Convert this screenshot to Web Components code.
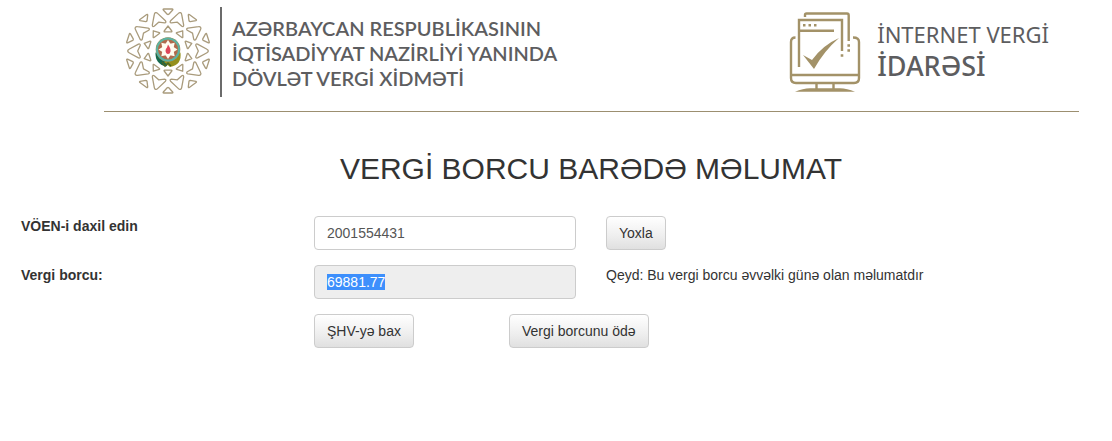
<!DOCTYPE html>
<html lang="az">
<head>
<meta charset="utf-8">
<title>Vergi borcu barədə məlumat</title>
<style>
body { margin: 0; background: #fff; color: #333; font: 14px/20px "Liberation Sans", Arial, sans-serif; }
</style>
</head>
<body>
<debt-page></debt-page>
<script>
const define = (name, html, setup) => customElements.define(name, class extends HTMLElement {
  constructor() {
    super();
    const t = document.createElement('template');
    t.innerHTML = html;
    this.attachShadow({ mode: 'open' }).append(t.content.cloneNode(true));
  }
  connectedCallback() { if (setup) setup.call(this, this.shadowRoot); }
});

// Ten-fold rosette: outer triangles, arrowheads and inner triangles around the emblem
define('ministry-emblem', `
<style>:host { display: block; flex: none; width: 86px; height: 88px; } svg { display: block; }</style>
<svg width="86" height="88" viewBox="-43 -44 86 88" role="img" aria-label="Gerb">
  <g id="ring" fill="none" stroke="#a99b7c" stroke-width="1.3" stroke-linejoin="round"></g>
  <path d="M-12.500 1.500Q-13 13-2 15.500L4 10-5 4Z" fill="#17694d"/>
  <path d="M12.500 1.500Q14 14 2 16L-4 11 6 5Z" fill="#94901d"/>
  <path d="M-6 11l3 4 3-3 3 3" fill="none" stroke="#4a6424" stroke-width="1.500"/>
  <circle cy="-1.500" r="12.300" fill="#a58a52"/>
  <circle cy="-1.500" r="11" fill="none" stroke="#5bb3a3" stroke-width="2"/>
  <circle cy="-1.500" r="9.800" fill="#b06a4c"/>
  <g id="star" transform="translate(0 -1.500)" fill="#fffdf0"></g>
  <path d="M0-6.500Q3-2.500 2.500 0.500 2 3 0 3-2 3-2.500 0-2.500-2.500-1-3.500Z" fill="#df4658"/>
</svg>`, function (root) {
  let ring = '';
  for (let i = 0; i < 10; i++) {
    const a = i * 36;
    ring += `<path transform="rotate(${a})" d="M-4.200-42H4.200Q5.300-42 4.700-41L.8-36.800Q0-36.200-.8-36.800L-4.700-41Q-5.300-42-4.200-42Z"/>
    <path transform="rotate(${a})" d="M0-25L3.800-20Q4.200-19.200 3.300-19.200H-3.300Q-4.200-19.200-3.800-20Z"/>
    <path transform="rotate(${a + 18})" d="M0-40.300Q1.100-40.300 1.700-39L6.900-29.500Q7.500-27.500 5.500-27.800L0-30.300-5.500-27.800Q-7.500-27.500-6.900-29.500L-1.700-39Q-1.100-40.300 0-40.300Z"/>`;
  }
  root.querySelector('#ring').innerHTML = ring;
  let star = '';
  for (let i = 0; i < 8; i++) star += `<path transform="rotate(${i * 45})" d="M0-9.500L2.600-5.500V0H-2.600V-5.500Z"/>`;
  root.querySelector('#star').innerHTML = star;
});

define('office-icon', `
<style>:host { display: block; flex: none; width: 72px; height: 81px; } svg { display: block; }</style>
<svg width="72" height="81" viewBox="789 12 72 81" fill="none" stroke="#a39268" stroke-width="2.400" role="img" aria-label="İnternet Vergi İdarəsi">
  <path d="M805 17V15Q805 13.500 806.500 13.500H847Q848.700 13.500 848.700 15.500V41"/>
  <path d="M799 67V20H842V51"/>
  <path d="M800 30.700H834"/>
  <path d="M803 25.200h2.500M808.500 25.200h2.500M814 25.200h2.500M840.700 55.500h2.600M847.400 45.500h2.600M847.400 50.500h2.600"/>
  <path d="M795.500 37.500Q791 37.500 791 42V78Q791 83 796 83H854Q859 83 859 78V42Q859 37.500 853 37.500M791 75H859M816.500 84v5M833.500 84v5"/>
  <path d="M803 55L812 60Q823 45 839 38Q824 51 814 69Z" fill="#a39268" stroke="none"/>
  <path d="M795 91.800Q803 88.300 810 88.300H840Q847 88.300 855 91.800Z" fill="#a39268" stroke="none"/>
</svg>`);

define('site-header', `
<style>
:host { display: flex; justify-content: space-between; box-sizing: border-box; height: 112px; margin: 0 33px 0 104px; padding: 7px 30px 0 21px; border-bottom: 1px solid #9c8f70; color: #5d5d5f; }
.brand, .office { display: flex; align-items: flex-start; }
.name { margin-left: 9px; padding: 9px 0 6px 10px; border-left: 2px solid #6b6b6b; font: 600 20px/25px Lato, sans-serif; white-space: nowrap; }
.office { gap: 16px; padding-top: 5px; }
.title { padding-top: 6px; font: 22px/32px "Noto Sans", sans-serif; white-space: nowrap; }
.title strong { display: block; font-size: 27px; font-weight: 500; }
</style>
<div class="brand"><ministry-emblem></ministry-emblem>
<div class="name">AZƏRBAYCAN RESPUBLİKASININ<br>İQTİSADİYYAT NAZİRLİYİ YANINDA<br>DÖVLƏT VERGİ XİDMƏTİ</div></div>
<div class="office"><office-icon></office-icon>
<div class="title">İNTERNET VERGİ<strong>İDARƏSİ</strong></div></div>`);

define('push-button', `
<style>
:host { display: inline-block; }
button { display: block; box-sizing: border-box; height: 34px; padding: 0 12px; border: 1px solid #ccc; border-radius: 4px; background: linear-gradient(#fff, #eee 60%, #e0e0e0); color: #333; font: inherit; white-space: nowrap; }
</style>
<button type="button"><slot></slot></button>`);

define('debt-form', `
<style>
:host { display: block; padding: 0 15px 0 21px; }
form { display: grid; grid-template-columns: 293fr 262fr 521fr; row-gap: 15px; }
label { font-weight: bold; }
input { box-sizing: border-box; width: 100%; height: 34px; margin: 0; padding: 6px 12px; border: 1px solid #ccc; border-radius: 4px; background: #fff; color: #555; font: inherit; outline: none; }
input[readonly] { background: #eee; }
input::selection { background: #3d8ffc; color: #fff; }
.side { padding-left: 30px; }
.actions { grid-column: 2 / 4; display: flex; gap: 95px; }
</style>
<form>
  <label for="voen">VÖEN-i daxil edin</label>
  <input id="voen" value="2001554431">
  <div class="side"><push-button>Yoxla</push-button></div>
  <label for="debt">Vergi borcu:</label>
  <input id="debt" value="69881.77" readonly>
  <div class="side">Qeyd: Bu vergi borcu əvvəlki günə olan məlumatdır</div>
  <div class="actions"><push-button>ŞHV-yə bax</push-button><push-button>Vergi borcunu ödə</push-button></div>
</form>`, function (root) {
  const debt = root.querySelector('#debt');
  debt.focus();
  debt.select();
});

define('debt-page', `
<style>
:host { display: block; }
h1 { margin: 40px 0 0 70px; font-size: 30px; line-height: 34px; font-weight: 400; text-align: center; }
debt-form { margin-top: 30px; }
</style>
<header><site-header></site-header></header>
<main><h1>VERGİ BORCU BARƏDƏ MƏLUMAT</h1><debt-form></debt-form></main>`);
</script>
</body>
</html>
